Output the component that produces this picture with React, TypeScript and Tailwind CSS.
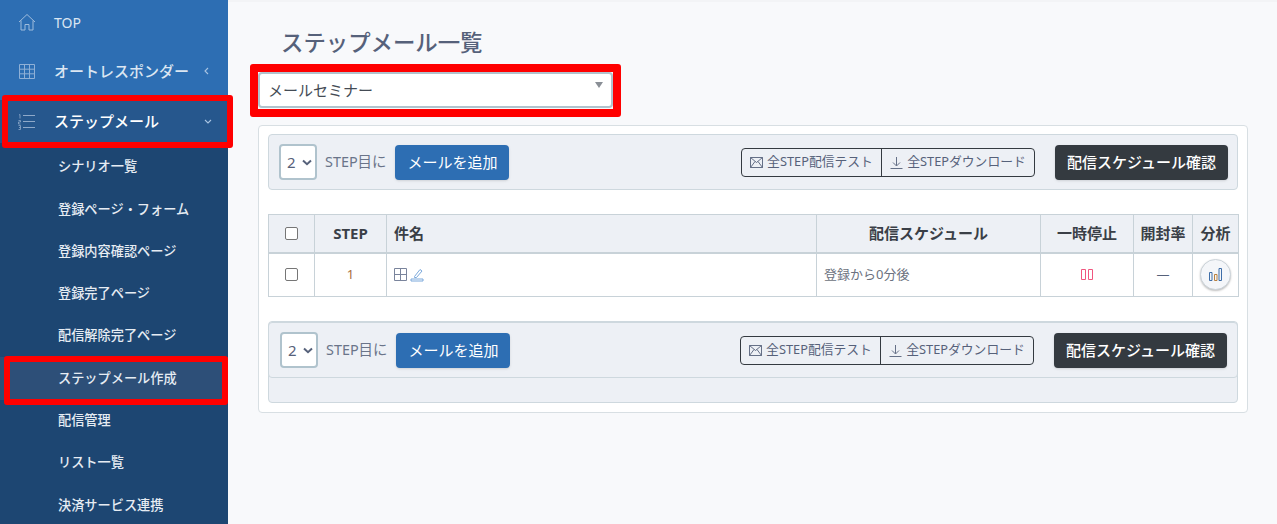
import React from "react";

const subMenu = [
  "シナリオ一覧",
  "登録ページ・フォーム",
  "登録内容確認ページ",
  "登録完了ページ",
  "配信解除完了ページ",
  "ステップメール作成",
  "配信管理",
  "リスト一覧",
  "決済サービス連携",
];

function HomeIcon() {
  return (
    <svg width="18" height="18" viewBox="0 0 18 18" fill="none" stroke="#9fbcdc" strokeWidth="1">
      <path d="M1 9 9 1.500 17 9M3 7.500V17h4v-5.500h4V17h4V7.500" />
    </svg>
  );
}

function GridIcon() {
  return (
    <svg width="16" height="15" viewBox="0 0 16 15" fill="none" stroke="#8fb0d6" strokeWidth="1">
      <path d="M.5.500h15v14H.5zM5.500.500v14M10.500.500v14M.5 5.200h15M.5 9.800h15" />
    </svg>
  );
}

function ListIcon() {
  return (
    <svg width="17" height="16" viewBox="0 0 17 16" fill="none" stroke="#8fa9c9" strokeWidth="1">
      <path d="M5 1.500h12M5 7.500h12M5 13.500h12" />
      <path d="M1 1 2 .5v4M.5 6.500h2v1.500h-2v2h2M.5 11.500h2v4h-2M1 13.500h1.500" strokeWidth=".8" />
    </svg>
  );
}

function StepBar({ shift, addGap }: { shift: string; addGap: string }) {
  return (
    <div className={`flex h-[56px] items-center bg-[#edf0f5] border border-[#ced8de] rounded-[4px] ${shift}`}>
      <div className="flex h-[36px] w-[38px] items-center justify-between rounded-[4px] border-2 border-[#b0c3cd] bg-white pl-[6px] pr-[3px] text-[15px] text-[#56617a]">
        2
        <svg width="10" height="7" viewBox="0 0 10 7" fill="none" stroke="#56617a" strokeWidth="2">
          <path d="M1 1.500 5 5.200 9 1.500" />
        </svg>
      </div>
      <span className="ml-2 text-[14.400px] text-[#6a7489]">STEP目に</span>
      <button className={`h-[35px] w-[114px] rounded-[4px] bg-[#2d6eb3] text-[15px] text-white shadow-sm ${addGap}`}>
        メールを追加
      </button>
      <div className="ml-auto flex h-[29px] rounded-[4px] border border-[#343a40] text-[12.800px] text-[#56617a]">
        <span className="flex w-[140px] items-center justify-center gap-1 border-r border-[#343a40]">
          <svg width="13" height="11" viewBox="0 0 13 11" fill="none" stroke="#56617a" strokeWidth=".9">
            <path d="M.5.500h12v10H.5zM.5.500l6 5 6-5M.5 10.500l4.500-6M12.500 10.500 8 4.500" />
          </svg>
          全STEP配信テスト
        </span>
        <span className="flex w-[152px] items-center justify-center gap-1">
          <svg width="13" height="13" viewBox="0 0 13 13" fill="none" stroke="#56617a" strokeWidth=".9">
            <path d="M6.500 1v8.500M3 6.500l3.500 3.500 3.500-3.500M.5 12.500h12" />
          </svg>
          全STEPダウンロード
        </span>
      </div>
      <button className="ml-[20px] h-[35px] w-[173px] rounded-[4px] bg-[#343a40] text-[15px] font-medium text-white shadow-sm">
        配信スケジュール確認
      </button>
    </div>
  );
}

function Check() {
  return <span className="mx-auto block size-[13px] rounded-[2px] border border-[#767676] bg-white" />;
}

export default function App() {
  const thClass = "border border-[#c8d2d8] border-b-2 border-b-[#c8d2d8] text-[15px] font-bold text-[#3a3f47]";
  const tdClass = "border border-[#c8d2d8] text-[13px] text-[#6c7280]";

  return (
    <div
      className="relative flex h-[524px] w-[1277px] overflow-hidden bg-[#f8f9fb]"
      style={{ fontFamily: '"Noto Sans", "Noto Sans CJK JP", sans-serif' }}
    >
      {/* Sidebar */}
      <aside className="w-[228px] shrink-0 bg-[#1d4672] text-white">
        <div className="h-[100px] bg-[#2d6eb3]">
          <div className="flex h-[44px] items-center pl-[18px] text-[14px] text-[#dbe6f2]">
            <HomeIcon />
            <span className="ml-[18px]">TOP</span>
          </div>
          <div className="flex h-[54px] items-center pl-[19px] text-[15px] font-medium text-[#dbe6f2]">
            <GridIcon />
            <span className="ml-[19px]">オートレスポンダー</span>
            <svg className="ml-[15px]" width="5" height="8" viewBox="0 0 5 8" fill="none" stroke="#a9c4e2" strokeWidth="1.100">
              <path d="M4 1 1 4l3 3" />
            </svg>
          </div>
        </div>
        <div className="flex h-[43px] items-center bg-[#26578d] pl-[18px] text-[15px] font-medium">
          <ListIcon />
          <span className="ml-[19px]">ステップメール</span>
          <svg className="ml-[45px]" width="8" height="5" viewBox="0 0 8 5" fill="none" stroke="#a9c4e2" strokeWidth="1.100">
            <path d="M1 1l3 3 3-3" />
          </svg>
        </div>
        <ul className="pt-[3px]">
          {subMenu.map((item) => (
            <li
              key={item}
              className={`flex h-[42.300px] items-center pl-[58px] text-[13.200px] font-medium text-[#e6ecf3] ${
                item === "ステップメール作成" ? "bg-[#2d4f78]" : ""
              }`}
            >
              {item}
            </li>
          ))}
        </ul>
      </aside>

      {/* Main */}
      <main className="flex-1 border-t-2 border-[#f3f4f6] pl-[30px] pr-[29px]">
        <h1 className="ml-[23px] mt-[26px] text-[22.400px] leading-[30px] font-medium text-[#56617a]">ステップメール一覧</h1>
        <div className="mt-[14px] flex h-[36px] w-[355px] items-start justify-between rounded-[4px] border-2 border-[#b0c3cd] bg-white pl-[8px] pr-[8px]">
          <span className="mt-[5px] text-[15px] leading-[22px] text-[#444b55]">メールセミナー</span>
          <span className="mt-[8px] h-0 w-0 border-x-[4px] border-t-[6px] border-x-transparent border-t-[#8a8f96]" />
        </div>

        <section className="mt-[17px] h-[288px] w-[990px] rounded-[4px] border border-[#d8dfe3] bg-white px-[9px] pt-[8px]">
          <StepBar shift="pl-[10px] pr-[9px]" addGap="ml-[9px]" />

          <table className="mt-[24px] w-[970px] table-fixed border-collapse">
            <colgroup>
              <col className="w-[46px]" />
              <col className="w-[72px]" />
              <col className="w-[430px]" />
              <col className="w-[224px]" />
              <col className="w-[93px]" />
              <col className="w-[59px]" />
              <col className="w-[46px]" />
            </colgroup>
            <thead>
              <tr className="h-[38px] bg-[#edf0f5]">
                <th className={thClass}><Check /></th>
                <th className={thClass}>STEP</th>
                <th className={`${thClass} pl-[7px] text-left`}>件名</th>
                <th className={thClass}>配信スケジュール</th>
                <th className={thClass}>一時停止</th>
                <th className={`${thClass} text-[14.400px]`}>開封率</th>
                <th className={`${thClass} text-[14.400px]`}>分析</th>
              </tr>
            </thead>
            <tbody>
              <tr className="h-[44px] bg-white">
                <td className={tdClass}><Check /></td>
                <td className={`${tdClass} text-center text-[#a8703f]`}>1</td>
                <td className={`${tdClass} pl-[7px]`}>
                  <div className="flex items-center gap-[3px]">
                    <svg width="13" height="13" viewBox="0 0 13 13" fill="none" stroke="#7a849c" strokeWidth="1">
                      <path d="M.5.500h12v12H.5zM6.500.500v12M.5 6.500h12" />
                    </svg>
                    <svg width="14" height="14" viewBox="0 0 14 14" fill="none" stroke="#7aa8db" strokeWidth="1">
                      <path d="M4.500 8.500 10 1.500l2 1.500-5.500 6.500h-2zM1 11h12v2H1z" />
                    </svg>
                  </div>
                </td>
                <td className={`${tdClass} pl-[7px]`}>登録から0分後</td>
                <td className={tdClass}>
                  <svg className="mx-auto" width="12" height="11" viewBox="0 0 12 11" fill="none" stroke="#f0567f" strokeWidth="1">
                    <path d="M.5.500h4v10h-4zM7.500.500h4v10h-4z" />
                  </svg>
                </td>
                <td className={`${tdClass} text-center text-[#56617a]`}>—</td>
                <td className={tdClass}>
                  <div className="mx-auto flex size-[31px] items-center justify-center rounded-full border border-[#ccd4da] bg-[#f4f6f9] shadow-[0_1px_2px_rgba(0,0,0,0.25)]">
                    <svg width="13" height="13" viewBox="0 0 13 13" fill="none" strokeWidth="1">
                      <path d="M.5 4.500h2.500v8H.5z" stroke="#3f6ea8" />
                      <path d="M5.500 6.500H8v6H5.500z" stroke="#b9803f" />
                      <path d="M10 .5h2.500v12H10z" stroke="#3f6ea8" />
                    </svg>
                  </div>
                </td>
              </tr>
            </tbody>
          </table>

          <div className="mt-[24px] h-[82px] rounded-[4px] border border-[#ced8de] bg-[#edf0f5]">
            <StepBar shift="-mx-px mt-0 pl-[11px] pr-[10px]" addGap="ml-[9px]" />
          </div>
        </section>
      </main>

      {/* Red annotation boxes */}
      <div className="absolute left-[2px] top-[95px] h-[53px] w-[231px] rounded-[3px] border-[6px] border-[#ff0000]" />
      <div className="absolute left-[4px] top-[356px] h-[49px] w-[224px] rounded-[3px] border-[6px] border-[#ff0000]" />
      <div className="absolute left-[250px] top-[64px] h-[53px] w-[371px] rounded-[3px] border-[8px] border-[#ff0000]" />
    </div>
  );
}
